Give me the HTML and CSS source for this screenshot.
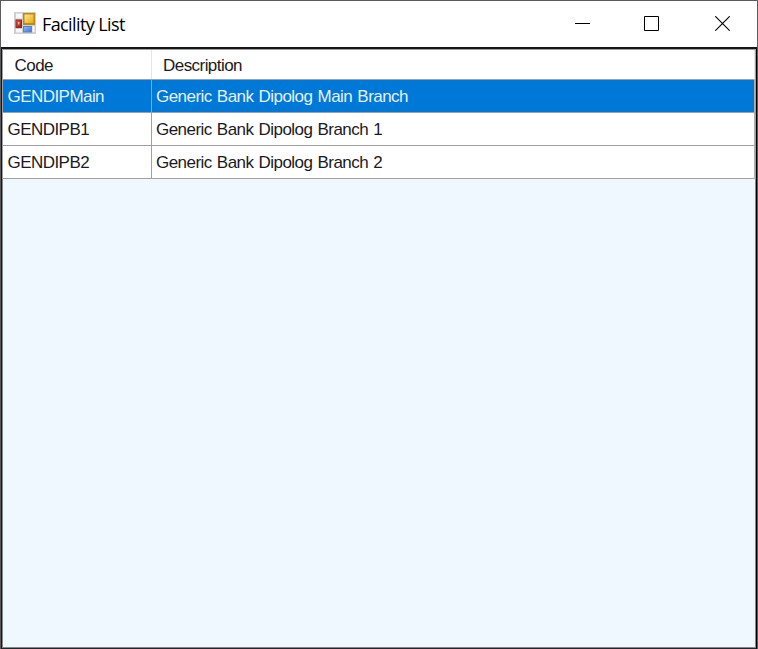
FILE: index.html
```html
<!DOCTYPE html>
<html lang="en">
<head>
<meta charset="utf-8">
<title>Facility List</title>
<link rel="stylesheet" href="styles.css">
</head>
<body>
<div class="window">
  <header class="titlebar">
    <svg class="app-icon" width="22" height="22" viewBox="0 0 22 22">
      <defs>
        <linearGradient id="gold" x2="1" y2="1"><stop stop-color="#ffe58a"/><stop offset="1" stop-color="#e9ac16"/></linearGradient>
        <linearGradient id="red" x2="1" y2="1"><stop stop-color="#d9604f"/><stop offset="1" stop-color="#a81c12"/></linearGradient>
        <linearGradient id="blue" x2="1" y2="1"><stop stop-color="#8db9f5"/><stop offset="1" stop-color="#3f78d8"/></linearGradient>
      </defs>
      <path d="M0 0H22V22H0Z" fill="#cfcfcf"/>
      <path d="M2 1.500H8V6.500H2ZM2 17H8V20.500H2ZM18.500 14H20.500V20H18.500Z" fill="#f6f6f6"/>
      <rect x="9" y="1" width="12" height="12" fill="#b98a1c"/>
      <rect x="10.500" y="2.500" width="9" height="8.500" fill="url(#gold)"/>
      <rect x="1.500" y="7.500" width="6.500" height="8.500" fill="#9c1c14"/>
      <rect x="2.500" y="8.500" width="4.500" height="6.500" fill="url(#red)"/>
      <path d="M4 10h1.500v2.500H4z" fill="#efb0a4"/>
      <rect x="9" y="14" width="9" height="6.500" fill="#5384d6"/>
      <rect x="10" y="15" width="7" height="4.500" fill="url(#blue)"/>
    </svg>
    <h1 class="title">Facility List</h1>
    <div class="controls">
      <svg width="15" height="15"><path d="M0 7.500H15" stroke="#000"/></svg>
      <svg width="15" height="15"><path d="M.5 .5H14.500V14.500H.5Z" fill="none" stroke="#000"/></svg>
      <svg width="15" height="15"><path d="M.3 .3L14.700 14.700M14.700 .3L.3 14.700" stroke="#000" stroke-width="1.100"/></svg>
    </div>
  </header>
  <main class="client">
    <div class="grid">
      <div class="row head"><div class="cell">Code</div><div class="cell">Description</div></div>
      <div class="row selected"><div class="cell">GENDIPMain</div><div class="cell">Generic Bank Dipolog Main Branch</div></div>
      <div class="row"><div class="cell">GENDIPB1</div><div class="cell">Generic Bank Dipolog Branch 1</div></div>
      <div class="row"><div class="cell">GENDIPB2</div><div class="cell">Generic Bank Dipolog Branch 2</div></div>
    </div>
  </main>
</div>
</body>
</html>
```
FILE: styles.css
```css
* { box-sizing: border-box; }
body { margin: 0; }
.window {
  width: 758px;
  height: 649px;
  display: flex;
  flex-direction: column;
  overflow: hidden;
  background: #fff;
  border: 1px solid #5c5a5e;
  border-bottom: 0;
}
.titlebar {
  height: 46px;
  flex: none;
  display: flex;
  align-items: center;
  padding: 0 27px 0 13px;
}
.app-icon { display: block; margin-top: -2px; }
.title {
  margin: 0 0 0 6px;
  font: 400 18px/24px "Open Sans", "Noto Sans", sans-serif;
  letter-spacing: -0.6px;
  color: #000;
  white-space: nowrap;
}
.controls { display: flex; gap: 56px; margin: -1px 0 0 auto; }
.controls svg { display: block; }
.controls svg:first-child { margin-right: -2px; }
.client {
  flex: 1;
  background: #eff7ff;
  border: 1px solid #161616;
  border-top-width: 2px;
  border-right-color: #000;
  border-bottom-color: #25252a;
  box-shadow: inset 0 0 0 1px #858789;
}
.grid {
  background: #fff;
  border: 1px solid #a0a0a0;
  border-bottom: 0;
  font: 400 17px/22px "Liberation Sans", Arial, sans-serif;
  letter-spacing: -0.55px;
  word-spacing: 1px;
  color: #1c1a22;
}
.row {
  display: grid;
  grid-template-columns: 149px 1fr;
  height: 33px;
  border-right: 1px solid #b0b0b0;
  border-bottom: 1px solid #a0a0a0;
}
.head { height: 30px; border-right-color: #e5e5e5; }
.cell { display: flex; align-items: center; padding: 2px 0 0 4px; white-space: nowrap; }
.cell:first-child { padding-left: 4.5px; border-right: 1px solid #a0a0a0; }
.head .cell { padding-left: 11px; }
.head .cell:first-child { padding-left: 11.5px; border-color: #e5e5e5; }
.selected { background: #0078d7; color: #e4f1fc; }
```
